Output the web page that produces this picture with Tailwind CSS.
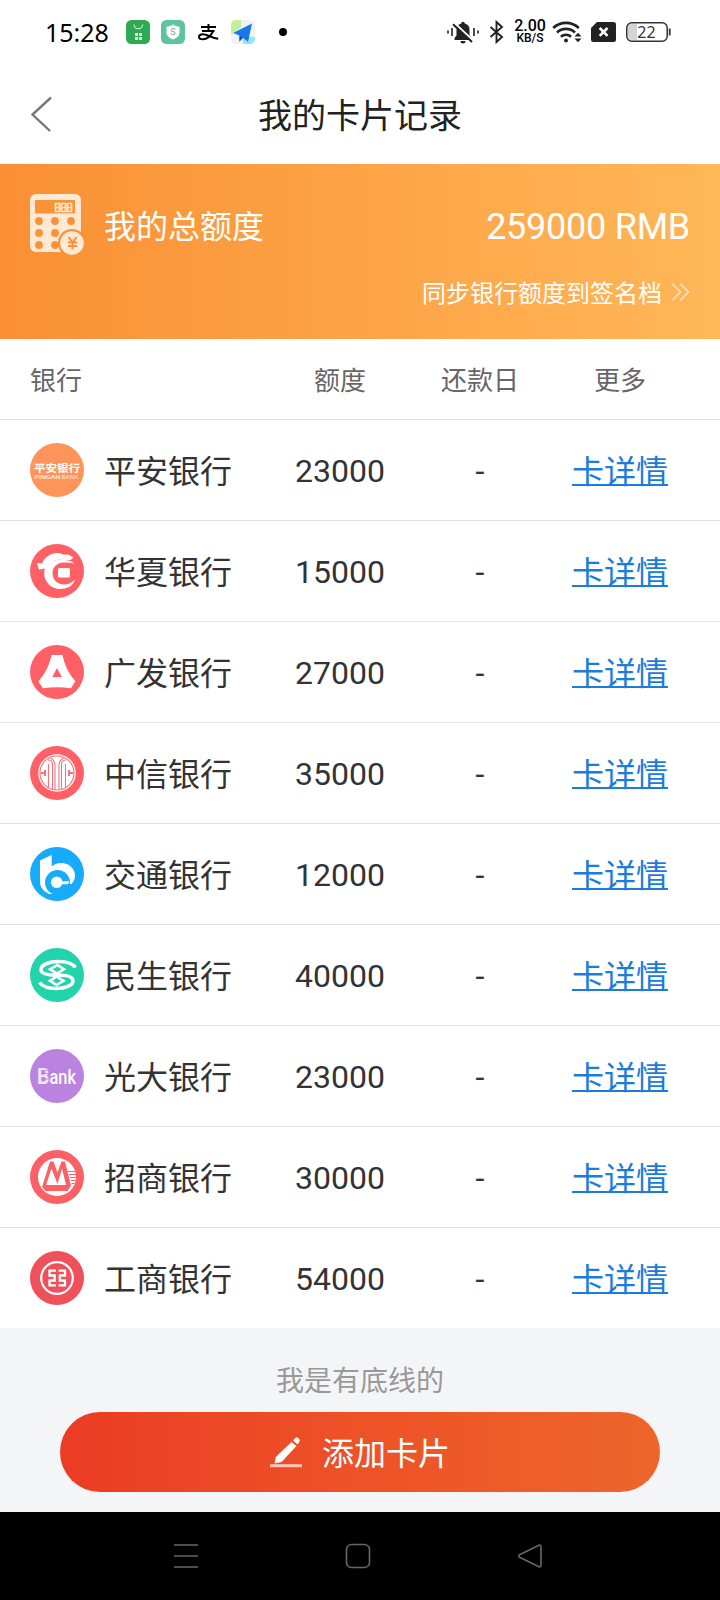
<!DOCTYPE html>
<html lang="zh-CN">
<head>
  <meta charset="UTF-8" />
  <meta name="viewport" content="width=device-width, initial-scale=1" />
  <title>我的卡片记录</title>
  <script src="https://cdn.jsdelivr.net/npm/@tailwindcss/browser@4"></script>
</head>

<body class="bg-[#f4f5f7] text-[#333] font-['Roboto','Noto_Sans_CJK_SC',sans-serif] w-[720px] h-[1600px] flex flex-col overflow-hidden">

  <!-- Status bar -->
  <div class="h-16 shrink-0 bg-white pl-[45px] pr-[49px] flex items-center justify-between text-black">
    <div class="flex items-center">
      <span class="w-[81px] text-[25px] leading-none font-normal font-['Noto_Sans',sans-serif]">15:28</span>
      <svg class="w-6 h-6" viewBox="0 0 24 24">
        <rect width="24" height="24" rx="5.5" fill="#2eaa55" />
        <path d="M8 4.5a4.3 4.3 0 0 0 8.600 0" fill="none" stroke="#d9f5df" stroke-width="1.100" />
        <path d="M9 13h3v3H9zM13 13h3v3h-3zM9 17h3v3H9zM13 17h3v3h-3z" fill="#d9f5df" />
      </svg>
      <svg class="w-6 h-6 ml-[11px]" viewBox="0 0 24 24">
        <rect width="24" height="24" rx="5.5" fill="#5fc3a0" />
        <path d="M12 4.500c2 1.500 4 2 6.500 2.200v6c0 3-2.500 5.300-6.500 6.800-4-1.500-6.500-3.800-6.500-6.800v-6c2.500-.2 4.500-.7 6.500-2.200z" fill="#fff" />
        <text x="12" y="15.300" font-size="9" text-anchor="middle" fill="#8a9a94">S</text>
      </svg>
      <svg class="w-6 h-6 ml-[11px]" viewBox="0 0 24 24" fill="none" stroke="#000" stroke-width="2">
        <path d="M5 7h15M12.500 4v7M6 11h12.500" />
        <path d="M17.300 11c-2.500 4.800-6 8.300-10.300 8.300-2.600 0-4-1.100-4-2.500 0-1.500 1.600-2.500 3.900-2.500 5 0 8.300 3.700 15.300 4.500" />
      </svg>
      <svg class="w-6 h-6 ml-[11px]" viewBox="0 0 24 24">
        <rect width="24" height="24" rx="5" fill="#f1f3f2" />
        <path d="M5 0h5v8L0 14V5a5 5 0 0 1 5-5z" fill="#c0f09b" />
        <path d="M12 17h12v2a5 5 0 0 1-5 5h-7z" fill="#8fe6fb" />
        <path d="M21 3.500 2 13l6.500 2.500v6l3.300-3.700 5.200 4z" fill="#1677ee" />
        <path d="M8.500 15.500v6l3.300-3.700z" fill="#0a4fc0" />
      </svg>
      <span class="w-2 h-2 ml-6 rounded-full bg-black"></span>
    </div>
    <div class="flex items-center">
      <svg class="w-8 h-6" viewBox="0 0 32 24" fill="#222">
        <path d="M7.500 20v-2l2-2.500V10a6.200 6.200 0 0 1 4.700-6.500 1.800 1.800 0 0 1 3.600 0A6.200 6.200 0 0 1 22.500 10v5.500l2 2.500v2zM13.500 21h5a2.500 2.500 0 0 1-5 0z" />
        <path d="M7 2.500 26.500 21" stroke="#fff" stroke-width="2" />
        <path d="M6 4.200 25 22" stroke="#222" stroke-width="2" />
        <path d="M1 10.500v3M5 8v8M27 8v8M31 10.500v3" stroke="#222" stroke-width="1.600" />
      </svg>
      <svg class="w-[15px] h-6 ml-2.5" viewBox="0 0 15 24" fill="none" stroke="#222" stroke-width="1.900">
        <path d="M1.500 7 13 17l-5.500 5V2L13 7 1.500 17" />
      </svg>
      <div class="w-[34px] ml-[9px] flex flex-col items-center font-medium">
        <span class="text-[16px] leading-[13px]">2.00</span>
        <span class="text-[12px] leading-[13px]">KB/S</span>
      </div>
      <svg class="w-[30px] h-6 ml-[5px]" viewBox="0 0 30 24" fill="none" stroke="#222" stroke-width="2.600">
        <path d="M1.200 8a18.500 18.500 0 0 1 25.600 0M5 12.500a13 13 0 0 1 18 0M8.900 16.700a7.500 7.500 0 0 1 10.200 0" />
        <circle cx="14" cy="20.500" r="2" fill="#222" stroke="none" />
        <path d="M22.500 16.500 26 12.800l3.500 3.700zM22.500 18.500l3.500 3.700 3.500-3.700z" fill="#222" stroke="none" />
      </svg>
      <svg class="w-[25px] h-5 ml-[9px]" viewBox="0 0 25 20">
        <path d="M6 0h16.500A2.500 2.500 0 0 1 25 2.500v15a2.500 2.500 0 0 1-2.500 2.500h-20A2.500 2.500 0 0 1 0 17.500V6z" fill="#222" />
        <path d="m8.700 6 7.800 7.800M16.500 6l-7.800 7.800" stroke="#fff" stroke-width="2.600" />
      </svg>
      <svg class="w-[45px] h-5 ml-2.5" viewBox="0 0 45 20">
        <path d="M6 2h5v16H6a4 4 0 0 1-4-4V6a4 4 0 0 1 4-4z" fill="#d4d4d4" />
        <rect x=".8" y=".8" width="40.400" height="18.400" rx="5" fill="none" stroke="#333" stroke-width="1.500" />
        <path d="M43.700 6.500v7" stroke="#333" stroke-width="1.800" />
        <text x="20.500" y="15.500" font-size="16" text-anchor="middle" fill="#333" font-family="Noto Sans">22</text>
      </svg>
    </div>
  </div>

  <!-- Title bar -->
  <header class="h-[100px] shrink-0 bg-white grid grid-cols-[1fr_auto_1fr] items-center px-[30px]">
    <svg class="w-[22px] h-9" viewBox="0 0 22 36" fill="none" stroke="#777" stroke-width="2.400">
      <path d="M21 1.500 2.500 18.500 20 35" />
    </svg>
    <h1 class="pt-1 text-[34px] leading-[50px] text-[#222]">我的卡片记录</h1>
  </header>

  <!-- Total limit -->
  <section class="h-[175px] shrink-0 px-[30px] bg-linear-to-r from-[#fa8f34] to-[#ffb758] text-white">
    <div class="pt-[30px] h-[92px] flex items-center">
      <svg class="w-[54px] h-[62px]" viewBox="0 0 54 62">
        <rect width="51" height="58" rx="6" fill="#ffe9d5" />
        <rect x="5" y="6" width="40" height="13.500" rx="1" fill="#fa9238" />
        <g fill="none" stroke="#ffe9d5" stroke-width="1.700">
          <path d="M25.500 9.500h4v8h-4zM31.500 9.500h4v8h-4zM37.500 9.500h4v8h-4zM25.500 13.500h4M31.500 13.500h4M37.500 13.500h4" />
        </g>
        <g fill="#fa9238">
          <circle cx="9" cy="27" r="3.900" /><circle cx="25" cy="27" r="3.900" /><circle cx="41" cy="27" r="3.900" />
          <circle cx="9" cy="39" r="3.900" /><circle cx="25" cy="39" r="3.900" />
          <circle cx="9" cy="51" r="3.900" /><circle cx="25" cy="51" r="3.900" />
          <circle cx="42" cy="49" r="14" />
        </g>
        <circle cx="42" cy="49" r="11.800" fill="#ffe9d5" />
        <path d="m38.500 43 4 5.500 4-5.500M42.500 48.500V55.500M38 48.500h9M38 52h9" fill="none" stroke="#fa9238" stroke-width="2" />
      </svg>
      <span class="ml-5 pt-1 text-[32px]">我的总额度</span>
      <span class="ml-auto pt-1 text-4xl tracking-[-0.25px]">259000 RMB</span>
    </div>
    <div class="mt-[22px] flex items-center justify-end text-2xl">
      <span>同步银行额度到签名档</span>
      <svg class="w-[20px] h-5 ml-2 mb-1" viewBox="0 0 20 20" fill="none" stroke="#ffe3c0" stroke-width="1.700">
        <path d="m2 1.500 8.500 8.500L2 18.500M10 1.500l8.500 8.500-8.500 8.500" />
      </svg>
    </div>
  </section>

  <!-- Card table -->
  <main class="shrink-0 bg-white text-[32px]">
    <div class="h-[81px] border-b border-[#e3e3e3] px-[30px] pt-1 grid grid-cols-[1fr_140px_140px_140px] items-center text-center text-[26px] text-[#666]">
      <span class="text-left">银行</span><span>额度</span><span>还款日</span><span>更多</span>
    </div>

    <div class="h-[101px] border-b border-[#e3e3e3] px-[30px] grid grid-cols-[1fr_140px_140px_140px] items-center text-center">
      <div class="flex items-center gap-5">
        <svg class="w-[54px] h-[54px]" viewBox="0 0 54 54">
          <circle cx="27" cy="27" r="27" fill="#fd945a" />
          <text x="4" y="28.500" font-size="10.500" font-weight="700" textLength="46" lengthAdjust="spacingAndGlyphs" fill="#fff" font-family="Noto Sans CJK SC">平安银行</text>
          <text x="4.500" y="36.300" font-size="6" font-weight="700" textLength="26" lengthAdjust="spacingAndGlyphs" fill="#ffe7d8">PINGAN</text>
          <text x="31.500" y="36.300" font-size="6" textLength="17" lengthAdjust="spacingAndGlyphs" fill="#ffe7d8">BANK</text>
        </svg>
        <span class="pt-[3px]">平安银行</span>
      </div>
      <span class="pt-0.5">23000</span><span class="pt-0.5">-</span>
      <a class="pt-1 text-[#1b7cdc] underline decoration-2 underline-offset-[1px]">卡详情</a>
    </div>

    <div class="h-[101px] border-b border-[#e3e3e3] px-[30px] grid grid-cols-[1fr_140px_140px_140px] items-center text-center">
      <div class="flex items-center gap-5">
        <svg class="w-[54px] h-[54px]" viewBox="0 0 54 54">
          <circle cx="27" cy="27" r="27" fill="#fe6066" />
          <path d="M7 19.500c1.500-1 3.500-.7 5 .3 1.500-5 6.500-9.500 13-10.500 3-.5 5.500-.5 8 1.200l5.500.3 5 2.700-3 2.500c-5 .3-9-.7-13-.2-5 .7-9.500 4.500-12 8.700l-6.500 1z" fill="#fff" />
          <path d="M44.500 19.500c-3-2.500-6.500-3.500-10-3.500C24 14.500 14 19 14.200 29.500c.2 9 7.500 15.500 15.800 15.500 8 0 13.500-3.500 14.800-9.700-3 3.700-6.500 5.200-11 5.200-6.500 0-11.300-5-11.300-11.200 0-6.500 5-10.800 11-10.800 4 0 7.500.2 11 1z" fill="#fff" />
          <rect x="28" y="24" width="12" height="9.500" rx="1.500" fill="#fff" />
        </svg>
        <span class="pt-[3px]">华夏银行</span>
      </div>
      <span class="pt-0.5">15000</span><span class="pt-0.5">-</span>
      <a class="pt-1 text-[#1b7cdc] underline decoration-2 underline-offset-[1px]">卡详情</a>
    </div>

    <div class="h-[101px] border-b border-[#e3e3e3] px-[30px] grid grid-cols-[1fr_140px_140px_140px] items-center text-center">
      <div class="flex items-center gap-5">
        <svg class="w-[54px] h-[54px]" viewBox="0 0 54 54">
          <circle cx="27" cy="27" r="27" fill="#fe6066" />
          <path d="M21.500 10h11C34.500 20 39 29 45.300 36L41 43.200c-9-1.400-19-1.400-28 0L8.300 36.500C15 29 19.500 20 21.500 10z" fill="#fff" />
          <path d="m27 23-4.700 9h9.400z" fill="#fe6066" />
        </svg>
        <span class="pt-[3px]">广发银行</span>
      </div>
      <span class="pt-0.5">27000</span><span class="pt-0.5">-</span>
      <a class="pt-1 text-[#1b7cdc] underline decoration-2 underline-offset-[1px]">卡详情</a>
    </div>

    <div class="h-[101px] border-b border-[#e3e3e3] px-[30px] grid grid-cols-[1fr_140px_140px_140px] items-center text-center">
      <div class="flex items-center gap-5">
        <svg class="w-[54px] h-[54px]" viewBox="0 0 54 54">
          <circle cx="27" cy="27" r="27" fill="#fe6066" />
          <circle cx="27" cy="27" r="18.800" fill="#fff" />
          <g fill="none" stroke="#f0757d" stroke-width="1.100">
            <circle cx="27" cy="27" r="17" />
            <path d="M18.500 18v23.500M22.500 43V18.500c0-3-2-4.500-4.500-4.500M25 44V20c0-4-1.500-6.500-4.500-8M35.500 18v23.500M31.500 43V18.500c0-3 2-4.500 4.500-4.500M29 44V20c0-4 1.500-6.500 4.500-8" />
            <path d="M15 24v6M10.500 27H15M39 24v6M43.500 27H39" stroke-width="2" />
          </g>
        </svg>
        <span class="pt-[3px]">中信银行</span>
      </div>
      <span class="pt-0.5">35000</span><span class="pt-0.5">-</span>
      <a class="pt-1 text-[#1b7cdc] underline decoration-2 underline-offset-[1px]">卡详情</a>
    </div>

    <div class="h-[101px] border-b border-[#e3e3e3] px-[30px] grid grid-cols-[1fr_140px_140px_140px] items-center text-center">
      <div class="flex items-center gap-5">
        <svg class="w-[54px] h-[54px]" viewBox="0 0 54 54">
          <circle cx="27" cy="27" r="27" fill="#18abfb" />
          <path d="M10 13.500 21.700 8v11.500c2.500-2.200 5.500-3.500 9.300-3.500 8 0 14 5.500 14 12.500 0 3.500-1.500 6-3.500 8.500H27v10h-8c-6-3-9-7-9-12z" fill="#fff" />
          <circle cx="27.500" cy="35.500" r="12.500" fill="#18abfb" />
          <circle cx="26.700" cy="35.300" r="5.800" fill="#fff" />
          <path d="M31 34.200h8.500L38 37.300h-7z" fill="#fff" />
        </svg>
        <span class="pt-[3px]">交通银行</span>
      </div>
      <span class="pt-0.5">12000</span><span class="pt-0.5">-</span>
      <a class="pt-1 text-[#1b7cdc] underline decoration-2 underline-offset-[1px]">卡详情</a>
    </div>

    <div class="h-[101px] border-b border-[#e3e3e3] px-[30px] grid grid-cols-[1fr_140px_140px_140px] items-center text-center">
      <div class="flex items-center gap-5">
        <svg class="w-[54px] h-[54px]" viewBox="0 0 54 54" fill="none" stroke="#fff">
          <circle cx="27" cy="27" r="27" fill="#22d3ab" stroke="none" />
          <path d="M45.500 19.500C42 15 36 13.500 29 13.500c-10 0-18 3.300-18 8.200 0 4.300 6.500 5.300 16 5.300s16 1.500 16 5.800c0 4.700-7.500 7.700-17 7.700-7 0-13-1.500-16.500-6" stroke-width="3.600" />
          <path d="m27.500 17 6.500 4.200-7 4.300-7-4.300zM26.500 28.500l7 4.300-7 4.200-6.500-4.200z" stroke-width="2.600" />
        </svg>
        <span class="pt-[3px]">民生银行</span>
      </div>
      <span class="pt-0.5">40000</span><span class="pt-0.5">-</span>
      <a class="pt-1 text-[#1b7cdc] underline decoration-2 underline-offset-[1px]">卡详情</a>
    </div>

    <div class="h-[101px] border-b border-[#e3e3e3] px-[30px] grid grid-cols-[1fr_140px_140px_140px] items-center text-center">
      <div class="flex items-center gap-5">
        <svg class="w-[54px] h-[54px]" viewBox="0 0 54 54">
          <circle cx="27" cy="27" r="27" fill="#ba83e0" />
          <text x="7" y="35" font-size="22" font-weight="700" textLength="12.500" lengthAdjust="spacingAndGlyphs" fill="#f1e3fa">B</text>
          <path d="M11 21.500h9M11 24.500h9M11 30h9" stroke="#ba83e0" stroke-width=".8" />
          <text x="19.500" y="35" font-size="20" font-weight="500" textLength="26.500" lengthAdjust="spacingAndGlyphs" fill="#fff">ank</text>
        </svg>
        <span class="pt-[3px]">光大银行</span>
      </div>
      <span class="pt-0.5">23000</span><span class="pt-0.5">-</span>
      <a class="pt-1 text-[#1b7cdc] underline decoration-2 underline-offset-[1px]">卡详情</a>
    </div>

    <div class="h-[101px] border-b border-[#e3e3e3] px-[30px] grid grid-cols-[1fr_140px_140px_140px] items-center text-center">
      <div class="flex items-center gap-5">
        <svg class="w-[54px] h-[54px]" viewBox="0 0 54 54">
          <circle cx="27" cy="27" r="27" fill="#fb6065" />
          <circle cx="27" cy="27" r="19" fill="#fff" />
          <path d="m12 37 8-25.500h3.500l4 11 4-11H35L41 35.500 37.500 41H15.500zM16 35h20L32 18.500 27.500 34 21.500 18.500z" fill="#fb6065" fill-rule="evenodd" />
          <path d="M38 21.500h7M39 24.500h7M40 27.500h6M41 30.500h4.500M41.500 33.500h3" stroke="#fb6065" stroke-width="1.200" />
        </svg>
        <span class="pt-[3px]">招商银行</span>
      </div>
      <span class="pt-0.5">30000</span><span class="pt-0.5">-</span>
      <a class="pt-1 text-[#1b7cdc] underline decoration-2 underline-offset-[1px]">卡详情</a>
    </div>

    <div class="h-[101px] px-[30px] border-b border-[#f4f5f7] grid grid-cols-[1fr_140px_140px_140px] items-center text-center">
      <div class="flex items-center gap-5">
        <svg class="w-[54px] h-[54px]" viewBox="0 0 54 54" fill="none" stroke="#fff">
          <circle cx="27" cy="27" r="27" fill="#ee5159" stroke="none" />
          <circle cx="27" cy="27" r="15.800" stroke-width="2.200" />
          <path d="M26 19.700h-6.500v4.800h5.200v5h-5.200v4.800H26M28.500 19.700H35v4.800h-5.200v5H35v4.800h-6.500" stroke-width="2.300" />
        </svg>
        <span class="pt-[3px]">工商银行</span>
      </div>
      <span class="pt-0.5">54000</span><span class="pt-0.5">-</span>
      <a class="pt-1 text-[#1b7cdc] underline decoration-2 underline-offset-[1px]">卡详情</a>
    </div>
  </main>

  <!-- Footer -->
  <div class="h-[183px] shrink-0 px-[60px] flex flex-col items-center">
    <p class="h-[83px] pt-8 text-[28px] leading-[42px] text-[#999]">我是有底线的</p>
    <button class="w-full h-20 rounded-full bg-linear-to-r from-[#eb3b24] to-[#ee652b] text-white text-[32px] flex items-center justify-center gap-5">
      <svg class="w-8 h-8" viewBox="0 0 32 32" fill="#fff">
        <path d="M21.500 6 26.500 10 11.500 26 4.500 27.500l1.300-6.500zM23 4.500 26 1.300c1-.8 4.500 2.200 3.700 3.500L27.800 8.500z" />
        <path d="M0 28.200h32v3H0z" fill="#ffc9bb" />
      </svg>
      <span class="pt-[3px]">添加卡片</span>
    </button>
  </div>

  <!-- System navigation -->
  <nav class="h-[88px] shrink-0 bg-black flex items-center justify-between pl-[173px] pr-[177px]">
    <svg class="w-[26px] h-[26px]" viewBox="0 0 26 26" stroke="#666" stroke-width="1.600"><path d="M1 2h24M1 13h24M1 24h24" /></svg>
    <svg class="w-[26px] h-[26px]" viewBox="0 0 26 26" fill="none" stroke="#666" stroke-width="1.600"><rect x="1.500" y="1.500" width="23" height="23" rx="5" /></svg>
    <svg class="w-[26px] h-[26px]" viewBox="0 0 26 26" fill="none" stroke="#666" stroke-width="1.600" stroke-linejoin="round"><path d="M22.500 2c1 0 1.500.5 1.500 1.500v19c0 1-1 1.700-2 1.200L2.500 14.200c-1-.6-1-1.800 0-2.400z" /></svg>
  </nav>

</body>
</html>
